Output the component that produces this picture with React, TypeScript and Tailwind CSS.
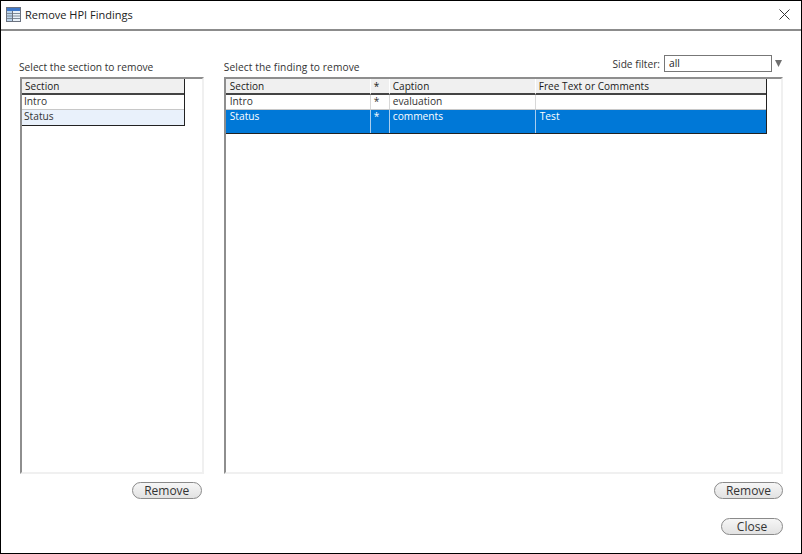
const font = { fontFamily: '"Open Sans", "Noto Sans", sans-serif' };

function Cell({ w, children, className = "" }: { w: string; children?: React.ReactNode; className?: string }) {
  return <div className={`${w} shrink-0 truncate ${className}`}>{children}</div>;
}

function Pill({ label, w }: { label: string; w: string }) {
  return (
    <button className={`${w} h-[17px] rounded-full border border-[#8a8a8a] bg-gradient-to-b from-[#f6f6f6] to-[#e2e2e2] text-[12px] leading-[15px] text-[#333]`}>
      {label}
    </button>
  );
}

function HeaderCell({ w, label, last, pad = "pl-[3px]" }: { w: string; label: string; last?: boolean; pad?: string }) {
  return (
    <div className={`${w} ${pad} ${last ? "grow" : "shrink-0 border-r border-r-white"} h-full bg-[#f0f0f0] border-b-2 border-b-[#444] text-[#1a1a1a] text-[10px] font-medium tracking-[0.05px]`}>
      {label}
    </div>
  );
}

export default function App() {
  return (
    <div className="w-[802px] h-[554px] bg-white border border-black flex flex-col overflow-hidden text-[10.2px] leading-[14px] text-[#333]" style={font}>
      <div className="h-[30px] shrink-0 border-b-2 border-[#8c8c8c] flex items-center pl-[5px] pr-[11px] pb-[1px]">
        <svg width="15" height="15" viewBox="0 0 15 15" className="shrink-0">
          <rect x="0.5" y="0.5" width="14" height="14" fill="#eaf1f8" stroke="#6b7280" />
          <rect x="1" y="1" width="13" height="3" fill="#3f78c8" />
          <rect x="1" y="4" width="5" height="10" fill="#b9d2ea" />
          <path d="M1 6.5h13M1 9h13M1 11.5h13" stroke="#7f8c99" strokeWidth="1" />
          <path d="M6.5 4v10" stroke="#6b7280" strokeWidth="1" />
        </svg>
        <span className="ml-[4px] text-[#222] text-[11px]">Remove HPI Findings</span>
        <svg width="11" height="11" viewBox="0 0 11 11" className="ml-auto">
          <path d="M0.5 0.5l10 10M10.5 0.5l-10 10" stroke="#333" strokeWidth="1" fill="none" />
        </svg>
      </div>

      <div className="flex-1 flex flex-col pl-[18px] pr-[18px]">
        <div className="flex justify-end items-center h-[17px] mt-[24px] -mb-[1px]">
          <span className="mr-[4px]">Side filter:</span>
          <div className="w-[108px] h-[17px] border border-[#777] pl-[4px] leading-[15px] text-[#222]">all</div>
          <span className="w-[10px] ml-[1px] flex justify-center">
            <svg width="7" height="7" viewBox="0 0 7 7"><path d="M0 0h7L3.5 7z" fill="#6f6f6f" /></svg>
          </span>
        </div>

        <div className="flex gap-[20px] -mt-[11px]">
          <div className="w-[185px]">
            <div className="h-[17px] leading-[14px]">Select the section to remove</div>
            <div className="ml-[1px] h-[397px] border-l-2 border-t-2 border-[#8e8e8e] border-r-2 border-r-[#f0f0f0] border-b-2 border-b-[#f0f0f0]">
              <div className="w-[163px] border-r border-b border-[#222]">
                <div className="h-[16px] flex"><HeaderCell w="w-full" label="Section" last /></div>
                <div className="h-[15px] pl-[2px] leading-[13px] border-b border-[#c8c8c8]">Intro</div>
                <div className="h-[15px] pl-[2px] leading-[13px] bg-[#e9f1fb]">Status</div>
              </div>
            </div>
            <div className="flex justify-end mt-[8px] pr-[2px]"><Pill label="Remove" w="w-[70px]" /></div>
          </div>

          <div className="w-[560px]">
            <div className="h-[17px] leading-[14px] tracking-[0.1px]">Select the finding to remove</div>
            <div className="h-[397px] border-l-2 border-t-2 border-[#8e8e8e] border-r-2 border-r-[#f0f0f0] border-b-2 border-b-[#f0f0f0]">
              <div className="w-[541px] border-r border-b border-[#222] leading-[13px]">
                <div className="h-[16px] flex leading-[14px]">
                  <HeaderCell w="w-[145px]" label="Section" pad="pl-[4px]" />
                  <HeaderCell w="w-[19px]" label="*" />
                  <HeaderCell w="w-[146px]" label="Caption" />
                  <HeaderCell w="" label="Free Text or Comments" last />
                </div>
                <div className="h-[15px] flex border-b border-[#c8c8c8]">
                  <Cell w="w-[145px]" className="pl-[4px] border-r border-[#d8d8d8]">Intro</Cell>
                  <Cell w="w-[19px]" className="pl-[3px] border-r border-[#d8d8d8]">*</Cell>
                  <Cell w="w-[146px]" className="pl-[3px] border-r border-[#d8d8d8]">evaluation</Cell>
                  <Cell w="w-[230px]" className="pl-[3px]" />
                </div>
                <div className="h-[23px] flex bg-[#0078d7] text-white">
                  <Cell w="w-[145px]" className="pl-[4px] border-r border-[#a9cdee]">Status</Cell>
                  <Cell w="w-[19px]" className="pl-[3px] border-r border-[#a9cdee]">*</Cell>
                  <Cell w="w-[146px]" className="pl-[3px] border-r border-[#a9cdee]">comments</Cell>
                  <Cell w="w-[230px]" className="pl-[4px]">Test</Cell>
                </div>
              </div>
            </div>
            <div className="flex justify-end mt-[8px]"><Pill label="Remove" w="w-[69px]" /></div>
          </div>
        </div>

        <div className="flex justify-end mt-[19px]"><Pill label="Close" w="w-[62px]" /></div>
      </div>
    </div>
  );
}
